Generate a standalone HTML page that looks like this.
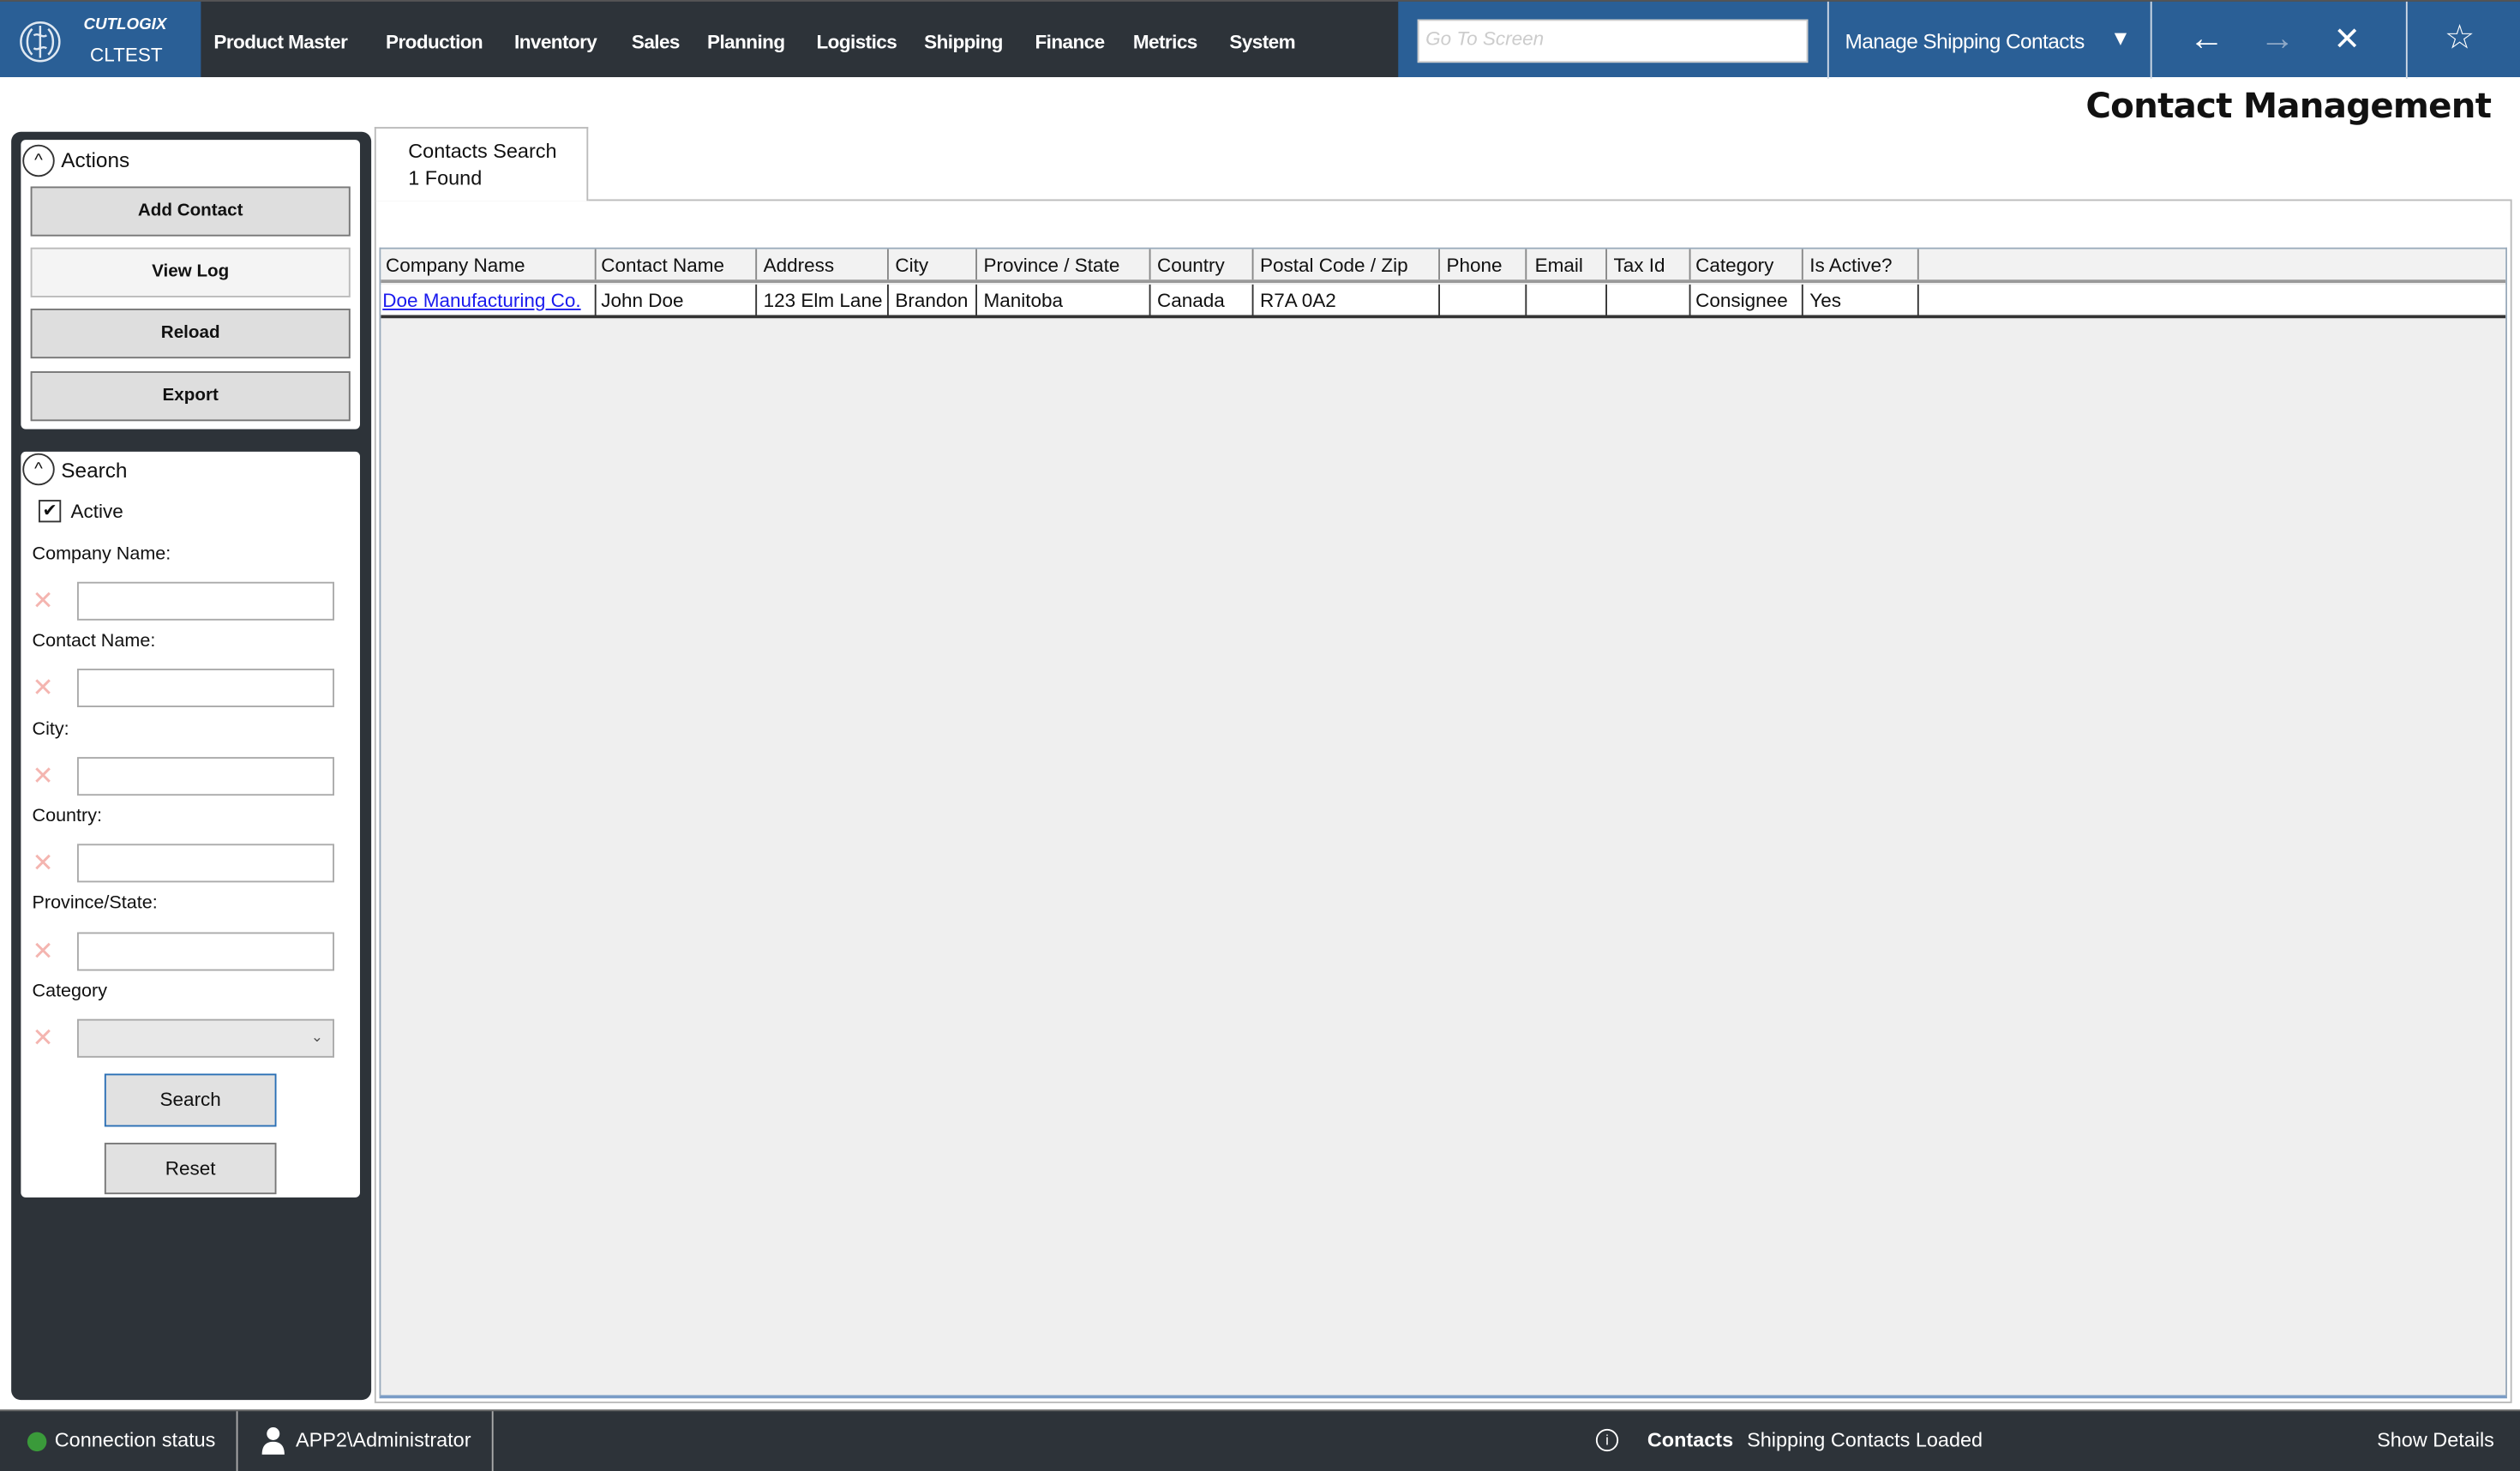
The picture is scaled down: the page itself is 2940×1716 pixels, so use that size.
<!DOCTYPE html>
<html><head><meta charset="utf-8"><style>
*{box-sizing:border-box;margin:0;padding:0}
html,body{width:2940px;height:1716px;overflow:hidden;background:#fff}
#w{width:1568px;height:915.2px;transform:scale(1.875);transform-origin:0 0;position:relative;font-family:"Liberation Sans",sans-serif;font-size:12px;color:#111}
.a{position:absolute}
.nav{top:0;left:0;width:1568px;height:48px;background:#2d3339;border-top:1px solid #555}
.nav span.m{position:absolute;top:18px;color:#fff;font-weight:bold;font-size:12px;letter-spacing:-.3px}
.btn{position:absolute;left:19px;width:199px;height:31px;background:#dedede;border:1px solid #777;font-weight:bold;font-size:11px;text-align:center;line-height:29px}
.lbl{position:absolute;left:20px;font-size:11.5px}
.inp{position:absolute;left:48px;width:160px;height:24px;border:1px solid #aaa;background:#fff}
.x{position:absolute;left:20px;color:#f4b5b0;font-size:16px}
.c{position:absolute;top:0;height:100%;border-right:1px solid #888}
.hd span,.rw span{position:absolute;top:3px;font-size:12px;white-space:nowrap}
</style></head><body><div id="w">
<div class="a nav">
 <div class="a" style="left:0;top:0;width:125px;height:47px;background:#2a5f96"></div>
 <svg class="a" style="left:11px;top:11px" width="28" height="28" viewBox="0 0 28 28" fill="none" stroke="#dfe8f2" stroke-width="1.3"><circle cx="14" cy="14" r="12"/><path d="M9 6c-4 4-4 12 0 16M19 6c4 4 4 12 0 16M10 10c3-2 5 2 8 0M10 18c3 2 5-2 8 0M14 4v20"/></svg>
 <div class="a" style="left:52px;top:9px;color:#fff;font-weight:bold;font-style:italic;font-size:10px">CUTLOGIX</div>
 <div class="a" style="left:56px;top:26px;color:#fff;font-size:12px">CLTEST</div>
 <span class="m" style="left:133px">Product Master</span><span class="m" style="left:240px">Production</span><span class="m" style="left:320px">Inventory</span><span class="m" style="left:393px">Sales</span><span class="m" style="left:440px">Planning</span><span class="m" style="left:508px">Logistics</span><span class="m" style="left:575px">Shipping</span><span class="m" style="left:644px">Finance</span><span class="m" style="left:705px">Metrics</span><span class="m" style="left:765px">System</span>
 <div class="a" style="left:870px;top:0;width:698px;height:47px;background:#2a5f96"></div>
 <div class="a" style="left:882px;top:11px;width:243px;height:27px;background:#fff;border:1px solid #ccc;color:#ccc;font-style:italic;font-size:12px;padding:4px 4px">Go To Screen</div>
 <div class="a" style="left:1137px;top:0;width:1px;height:48px;background:#cfd9e6"></div>
 <div class="a" style="left:1338px;top:0;width:1px;height:48px;background:#cfd9e6"></div>
 <div class="a" style="left:1497px;top:0;width:1px;height:48px;background:#cfd9e6"></div>
 <div class="a" style="left:1148px;top:17px;color:#fff;font-size:13px;letter-spacing:-.3px">Manage Shipping Contacts</div>
 <div class="a" style="left:1313px;top:15px;color:#fff;font-size:13px">▼</div>
 <div class="a" style="left:1362px;top:10px;color:#fff;font-size:22px">←</div>
 <div class="a" style="left:1406px;top:10px;color:#8fa9c7;font-size:22px">→</div>
 <div class="a" style="left:1452px;top:11px;color:#fff;font-size:20px">✕</div>
 <div class="a" style="left:1521px;top:10px;color:#fff;font-size:21px">☆</div>
</div>
<div class="a" style="right:18px;top:54px;font-size:21.5px;font-weight:bold;font-family:'DejaVu Sans',sans-serif;letter-spacing:-.4px">Contact Management</div>
<div class="a" style="left:7px;top:82px;width:224px;height:789px;background:#2d3339;border-radius:6px"></div>
<div class="a" style="left:13px;top:87px;width:211px;height:180px;background:#fff;border-radius:3px"></div>
<div class="a" style="left:14px;top:90px;width:20px;height:20px;border:1.3px solid #333;border-radius:50%;text-align:center;font-size:11px;line-height:18px">^</div>
<div class="a" style="left:38px;top:92px;font-size:13px">Actions</div>
<div class="btn" style="top:116px">Add Contact</div>
<div class="btn" style="top:154px;background:#f4f4f4;border-color:#bbb">View Log</div>
<div class="btn" style="top:192px">Reload</div>
<div class="btn" style="top:231px">Export</div>
<div class="a" style="left:13px;top:281px;width:211px;height:464px;background:#fff;border-radius:3px"></div>
<div class="a" style="left:14px;top:282px;width:20px;height:20px;border:1.3px solid #333;border-radius:50%;text-align:center;font-size:11px;line-height:18px">^</div>
<div class="a" style="left:38px;top:285px;font-size:13px">Search</div>
<div class="a" style="left:24px;top:311px;width:14px;height:14px;border:1px solid #333;font-size:11px;line-height:12px;text-align:center">✔</div>
<div class="a" style="left:44px;top:311px;font-size:12px">Active</div>
<div class="lbl" style="top:339px">Company Name:</div><div class="x" style="top:364px">✕</div><div class="inp" style="top:362px"></div>
<div class="lbl" style="top:393px">Contact Name:</div><div class="x" style="top:418px">✕</div><div class="inp" style="top:416px"></div>
<div class="lbl" style="top:448px">City:</div><div class="x" style="top:473px">✕</div><div class="inp" style="top:471px"></div>
<div class="lbl" style="top:502px">Country:</div><div class="x" style="top:527px">✕</div><div class="inp" style="top:525px"></div>
<div class="lbl" style="top:556px">Province/State:</div><div class="x" style="top:582px">✕</div><div class="inp" style="top:580px"></div>
<div class="lbl" style="top:611px">Category</div><div class="x" style="top:636px">✕</div><div class="inp" style="top:634px;background:#e8e8e8;font-size:9px;text-align:right;padding:5px 6px;color:#555">⌄</div>
<div class="a" style="left:65px;top:668px;width:107px;height:33px;background:#e1e1e1;border:1px solid #2a6fb5;text-align:center;line-height:31px;font-size:12px">Search</div>
<div class="a" style="left:65px;top:711px;width:107px;height:32px;background:#e1e1e1;border:1px solid #777;text-align:center;line-height:30px;font-size:12px">Reset</div>
<div class="a" style="left:233px;top:124px;width:1330px;height:749px;border:1px solid #bbb;background:#fff"></div>
<div class="a" style="left:233px;top:79px;width:133px;height:46px;border:1px solid #bbb;border-bottom:none;background:#fff"></div>
<div class="a" style="left:254px;top:86px;font-size:12.5px;line-height:17px">Contacts Search<br>1 Found</div>
<div class="a" style="left:236px;top:154px;width:1324px;height:716px;background:#efefef;border:1px solid #9ab;border-bottom:2px solid #7a9cc6"></div>
<div class="a hd" style="left:237px;top:155px;width:1322px;height:21px;background:#f2f2f2;border-bottom:2px solid #999">
 <div class="c" style="left:0;width:134px"></div><div class="c" style="left:134px;width:100px"></div><div class="c" style="left:234px;width:82px"></div><div class="c" style="left:316px;width:55px"></div><div class="c" style="left:371px;width:108px"></div><div class="c" style="left:479px;width:64px"></div><div class="c" style="left:543px;width:116px"></div><div class="c" style="left:659px;width:54px"></div><div class="c" style="left:713px;width:50px"></div><div class="c" style="left:763px;width:52px"></div><div class="c" style="left:815px;width:70px"></div><div class="c" style="left:885px;width:72px"></div>
 <span style="left:3px">Company Name</span><span style="left:137px">Contact Name</span><span style="left:238px">Address</span><span style="left:320px">City</span><span style="left:375px">Province / State</span><span style="left:483px">Country</span><span style="left:547px">Postal Code / Zip</span><span style="left:663px">Phone</span><span style="left:718px">Email</span><span style="left:767px">Tax Id</span><span style="left:818px">Category</span><span style="left:889px">Is Active?</span>
</div>
<div class="a rw" style="left:237px;top:177px;width:1322px;height:21px;background:#fff;border-bottom:2px solid #333">
 <div class="c" style="left:0;width:134px;border-color:#333"></div><div class="c" style="left:134px;width:100px;border-color:#333"></div><div class="c" style="left:234px;width:82px;border-color:#333"></div><div class="c" style="left:316px;width:55px;border-color:#333"></div><div class="c" style="left:371px;width:108px;border-color:#333"></div><div class="c" style="left:479px;width:64px;border-color:#333"></div><div class="c" style="left:543px;width:116px;border-color:#333"></div><div class="c" style="left:659px;width:54px;border-color:#333"></div><div class="c" style="left:713px;width:50px;border-color:#333"></div><div class="c" style="left:763px;width:52px;border-color:#333"></div><div class="c" style="left:815px;width:70px;border-color:#333"></div><div class="c" style="left:885px;width:72px;border-color:#333"></div>
 <span style="left:1px;color:#1a1aee;text-decoration:underline">Doe Manufacturing Co.</span><span style="left:137px">John Doe</span><span style="left:238px">123 Elm Lane</span><span style="left:320px">Brandon</span><span style="left:375px">Manitoba</span><span style="left:483px">Canada</span><span style="left:547px">R7A 0A2</span><span style="left:818px">Consignee</span><span style="left:889px">Yes</span>
</div>
<div class="a" style="left:0;top:877px;width:1568px;height:39px;background:#2d3339;border-top:1px solid #666;color:#fff;font-size:12.5px">
 <div class="a" style="left:17px;top:13px;width:12px;height:12px;border-radius:50%;background:#3a9a3a"></div>
 <div class="a" style="left:34px;top:11px">Connection status</div>
 <div class="a" style="left:147px;top:0;width:1px;height:38px;background:#aaa"></div>
 <svg class="a" style="left:162px;top:9px" width="16" height="18" viewBox="0 0 16 18" fill="#fff"><circle cx="8" cy="5" r="4"/><path d="M1 18c0-6 3-8 7-8s7 2 7 8z"/></svg>
 <div class="a" style="left:184px;top:11px">APP2\Administrator</div>
 <div class="a" style="left:306px;top:0;width:1px;height:38px;background:#aaa"></div>
 <div class="a" style="left:993px;top:11px;width:14px;height:14px;border:1.2px solid #fff;border-radius:50%;font-size:9px;text-align:center;line-height:12px">i</div>
 <div class="a" style="left:1025px;top:11px;font-weight:bold">Contacts</div>
 <div class="a" style="left:1087px;top:11px">Shipping Contacts Loaded</div>
 <div class="a" style="left:1479px;top:11px">Show Details</div>
</div>
</div></body></html>
